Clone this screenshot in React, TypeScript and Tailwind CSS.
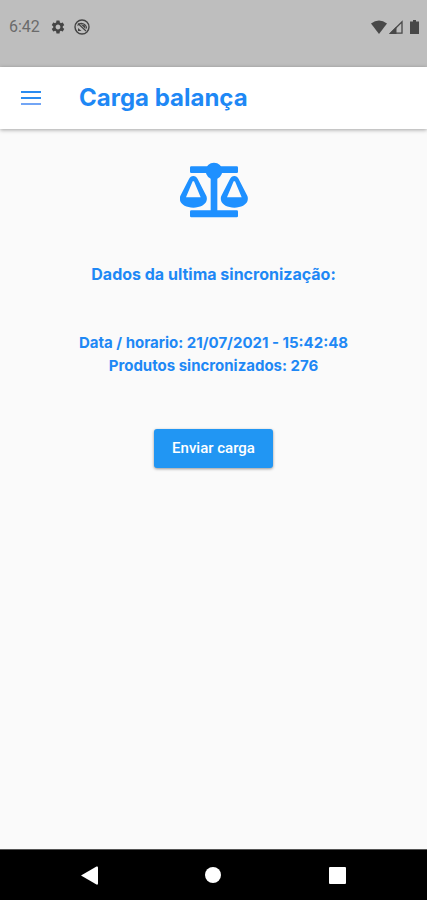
import { MdSettings } from "react-icons/md";

function ScaleIcon() {
  return (
    <svg viewBox="60 50 204 168" className="h-14 w-[68px]" fill="#1e90ff" aria-hidden="true">
      <rect x="90" y="63" width="144" height="20" rx="4" />
      <circle cx="162" cy="77" r="25" />
      <rect x="152" y="80" width="20" height="130" />
      <rect x="90" y="195" width="144" height="21" rx="4" />
      <path
        fillRule="evenodd"
        d="M100 92c6 0 10 3 13 9l25 49c3 5 3 10 2 15-3 14-20 22-40 22s-37-8-40-22c-1-5-1-10 2-15l25-49c3-6 7-9 13-9ZM98 108 78 156h44L102 108Z"
      />
      <path
        fillRule="evenodd"
        d="M223 92c6 0 10 3 13 9l25 49c3 5 3 10 2 15-3 14-20 22-40 22s-37-8-40-22c-1-5-1-10 2-15l25-49c3-6 7-9 13-9ZM221 108l-20 48h44l-20-48Z"
      />
    </svg>
  );
}

function StatusBar() {
  return (
    <div className="flex h-[67px] items-start justify-between bg-[#bebebe] pt-[18px] pr-2 pl-[9px] text-[#444]">
      <div className="flex h-[18px] items-center">
        <span className="w-10 font-[Roboto,sans-serif] text-base leading-[18px] text-[#6b6b6b]">6:42</span>
        <MdSettings className="ml-px size-4" aria-hidden="true" />
        <svg viewBox="0 0 16 16" className="ml-2 size-4" fill="none" stroke="currentColor" aria-hidden="true">
          <circle cx="8" cy="8" r="7" strokeWidth="1.4" />
          <path d="M3.500 6.500A5 5 0 0 1 12.500 9.500M4 4.500l8 7.500" strokeWidth="1.2" />
          <path d="M6.500 5 11 6.500l.5 3.500Z" fill="currentColor" stroke="none" />
          <path d="M4 9v3h3.500Z" fill="currentColor" stroke="none" />
        </svg>
      </div>
      <div className="flex h-[18px] items-center text-[#484848]">
        <svg viewBox="0 0 16 14" className="h-3.5 w-4" fill="currentColor" aria-hidden="true">
          <path d="M0 3.500Q8-2.500 16 3.500L8 14Z" />
        </svg>
        <svg viewBox="0 0 14 14" className="ml-0.5 size-3.5" aria-hidden="true">
          <path d="M1.500 13.200 13 1.800v11.400Z" fill="none" stroke="currentColor" strokeWidth="1.3" />
          <path d="M0 14 7.500 6.500V14Z" fill="currentColor" />
        </svg>
        <svg viewBox="0 0 9 14" className="ml-[7px] h-3.5 w-[9px]" fill="currentColor" aria-hidden="true">
          <path d="M3 0h3v1.500h3V14H0V1.500h3Z" />
        </svg>
      </div>
    </div>
  );
}

export default function App() {
  return (
    <div className="flex min-h-screen flex-col bg-[#fafafa] font-[Inter,sans-serif] text-[#1e88f5]">
      <StatusBar />
      <header className="z-10 flex h-[62px] items-center bg-white pl-[21px] shadow-[0_1px_4px_rgba(0,0,0,0.35)]">
        <button type="button" aria-label="Menu" className="flex w-5 flex-col gap-1">
          <span className="h-0.5 w-full bg-[#2b8cf0]" />
          <span className="h-0.5 w-full bg-[#2b8cf0]" />
          <span className="h-0.5 w-full bg-[#72a5f5]" />
        </button>
        <h1 className="ml-[38px] text-2xl leading-8 font-bold">Carga balança</h1>
      </header>
      <main className="flex flex-1 flex-col items-center px-4 pt-[33px] text-center text-[15px] leading-[23px] font-bold">
        <ScaleIcon />
        <h2 className="mt-[45px] text-base leading-[23px]">Dados da ultima sincronização:</h2>
        <p className="mt-[45px]">Data / horario: 21/07/2021 - 15:42:48</p>
        <p>Produtos sincronizados: 276</p>
        <button
          type="button"
          className="mt-[52px] h-[39px] rounded-[3px] bg-[#2196f3] px-[18px] font-[Roboto,sans-serif] text-[15px] font-medium text-white shadow-[0_1px_3px_rgba(0,0,0,0.4)]"
        >
          Enviar carga
        </button>
      </main>
      <nav className="grid h-[51px] grid-cols-3 items-center border-t border-[#555] bg-black px-7" aria-label="Sistema">
        <button type="button" aria-label="Voltar" className="justify-self-center">
          <svg viewBox="0 0 17 19" className="h-[19px] w-[17px]" fill="white" aria-hidden="true">
            <path d="M0 9.500 15.500 .5q1.500-.5 1.500 1v16q0 1.500-1.500 1Z" />
          </svg>
        </button>
        <button type="button" aria-label="Início" className="size-4 justify-self-center rounded-full bg-white" />
        <button type="button" aria-label="Recentes" className="size-[17px] justify-self-center rounded-[1px] bg-white" />
      </nav>
    </div>
  );
}
